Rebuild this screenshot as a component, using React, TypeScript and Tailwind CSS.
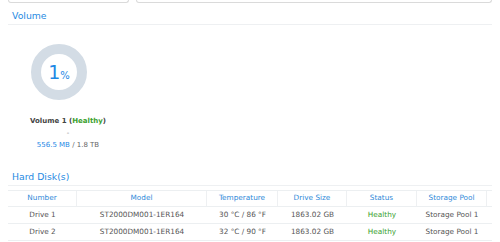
import React from 'react';

/**
 * Storage overview panel: volume usage donut and hard disk table
 */

interface Disk {
  number: string;
  model: string;
  temperature: string;
  size: string;
  status: string;
  pool: string;
}

const disks: Disk[] = [
  {
    number: 'Drive 1',
    model: 'ST2000DM001-1ER164',
    temperature: '30 °C / 86 °F',
    size: '1863.02 GB',
    status: 'Healthy',
    pool: 'Storage Pool 1',
  },
  {
    number: 'Drive 2',
    model: 'ST2000DM001-1ER164',
    temperature: '32 °C / 90 °F',
    size: '1863.02 GB',
    status: 'Healthy',
    pool: 'Storage Pool 1',
  },
];

const columns = [
  { label: 'Number', width: 'w-[69px]' },
  { label: 'Model', width: 'w-[130px]' },
  { label: 'Temperature', width: 'w-[71px]' },
  { label: 'Drive Size', width: 'w-[69px]' },
  { label: 'Status', width: 'w-[70px]' },
  { label: 'Storage Pool', width: 'w-[70px]' },
];

function SectionTitle({ children }: { children: React.ReactNode }) {
  return (
    <div className="pl-1 pt-[6px] pb-[1px] text-[9.3px] leading-[14px] text-[#1f8ae2] border-b border-[#eef0f2]">
      {children}
    </div>
  );
}

function UsageDonut({ percent }: { percent: number }) {
  return (
    <div className="w-[56px] h-[56px] rounded-full border-[10px] border-[#d3dce5] flex items-center justify-center">
      <span className="text-[#1e88e5] leading-none pt-[1px]">
        <span className="text-[19px]">{percent}</span>
        <span className="text-[10px]">%</span>
      </span>
    </div>
  );
}

export default function App() {
  return (
    <div className="w-[500px] h-[242px] bg-white overflow-hidden px-2 font-['DejaVu_Sans',sans-serif]">
      {/* bottoms of the panels above */}
      <div className="flex gap-[7px] h-[3px]">
        <div className="w-[121px] border-x border-b border-[#dadada] rounded-b-[3px]" />
        <div className="flex-1 border-x border-b border-[#dadada] rounded-b-[3px]" />
      </div>

      <SectionTitle>Volume</SectionTitle>
      <div className="w-[120px] flex flex-col items-center">
        <div className="mt-[19px] self-start ml-[23px]">
          <UsageDonut percent={1} />
        </div>
        <div className="mt-[15px] text-[7px] leading-[12px] font-bold text-[#444]">
          Volume 1 (<span className="text-[#3aa12e]">Healthy</span>)
        </div>
        <div className="text-[7px] leading-[12px] text-[#888]">-</div>
        <div className="text-[7px] leading-[12px] text-[#666]">
          <span className="text-[#1e88e5]">556.5 MB</span> / 1.8 TB
        </div>
      </div>

      <div className="mt-[13px]">
        <SectionTitle>Hard Disk(s)</SectionTitle>
      </div>

      <div className="mt-[4px] text-[7.3px]">
        <div className="flex h-[17px] border-y border-[#eceff1] text-[#2f8ad9]">
          {columns.map((c) => (
            <div
              key={c.label}
              className={`${c.width} flex items-center justify-center border-r border-[#eef0f2]`}
            >
              {c.label}
            </div>
          ))}
          <div className="flex-1" />
        </div>
        {disks.map((d) => (
          <div key={d.number} className="flex h-[17px] border-b border-[#eceff1] text-[#555]">
            <div className="w-[69px] flex items-center justify-center">{d.number}</div>
            <div className="w-[130px] flex items-center justify-center">{d.model}</div>
            <div className="w-[71px] flex items-center justify-center">{d.temperature}</div>
            <div className="w-[69px] flex items-center justify-center">{d.size}</div>
            <div className="w-[70px] flex items-center justify-center text-[#3aa12e]">{d.status}</div>
            <div className="w-[70px] flex items-center justify-center">{d.pool}</div>
            <div className="flex-1" />
          </div>
        ))}
      </div>
    </div>
  );
}
